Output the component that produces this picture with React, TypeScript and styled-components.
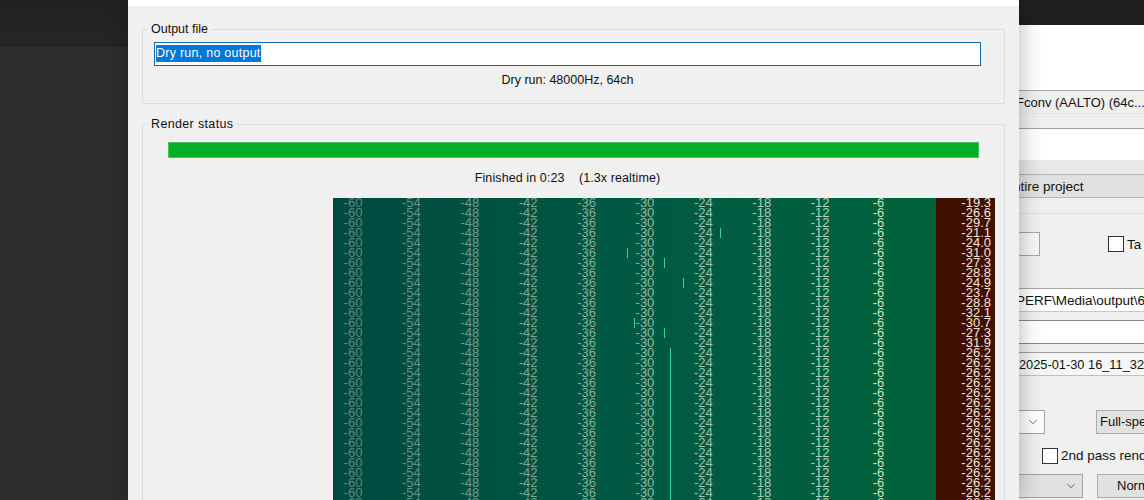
import React from "react";
import styled, { createGlobalStyle } from "styled-components";
import { ChevronDown } from "lucide-react";

const GlobalStyle = createGlobalStyle`
  html, body {
    margin: 0;
    padding: 0;
    background: #2d2d2d;
  }
  * {
    box-sizing: border-box;
  }
`;

const Screen = styled.div`
  display: flex;
  width: 1144px;
  height: 500px;
  overflow: hidden;
  font-family: "Liberation Sans", Arial, sans-serif;
  font-size: 12.5px;
  color: #111;
`;

const Backdrop = styled.div`
  flex: 0 0 128px;
  background: linear-gradient(#222222 0, #262626 44px, #1c1c1c 45px, #2d2d2d 46px);
`;

const Dialog = styled.div`
  flex: 0 0 891px;
  position: relative;
  z-index: 2;
  height: 500px;
  display: flex;
  flex-direction: column;
  background: #f0f0f0;
  box-shadow: 0 0 22px rgba(0, 0, 0, 0.3);
`;

const TitleStrip = styled.div`
  flex: 0 0 6px;
  background: #ffffff;
`;

const Body = styled.div`
  flex: 1;
  padding: 16px 14px 0 14px;
  display: flex;
  flex-direction: column;
  gap: 13px;
  min-height: 0;
`;

const Group = styled.fieldset<{ $height: number }>`
  flex: 0 0 ${(p) => p.$height}px;
  margin: 0;
  padding: 0;
  min-width: 0;
  border: 1px solid #dcdcdc;
  border-radius: 2px;
`;

const GroupTitle = styled.legend<{ $spacing: number }>`
  margin-left: 5px;
  padding: 0 3px;
  line-height: 14px;
  font-size: 12.5px;
  letter-spacing: ${(p) => p.$spacing}px;
`;

const OutputInput = styled.div`
  height: 24px;
  margin: 6px 23px 0 11px;
  padding: 2px 0 0 1px;
  background: #ffffff;
  border: 1px solid #0f6cad;
`;

const Selected = styled.span`
  display: inline-block;
  height: 17px;
  line-height: 17px;
  letter-spacing: 0.25px;
  background: #0078d7;
  color: #ffffff;
`;

const Caption = styled.div<{ $top: number; $spacing: number }>`
  margin-top: ${(p) => p.$top}px;
  padding-right: 12px;
  text-align: center;
  line-height: 14px;
  letter-spacing: ${(p) => p.$spacing}px;
  white-space: pre;
`;

const Progress = styled.div`
  height: 16px;
  margin: 11px 25px 0 25px;
  background: #06ad25;
  border: 1px solid #4cbf5f;
`;

const Meter = styled.div`
  display: flex;
  width: 662px;
  height: 302px;
  margin: 13px 0 0 190px;
  overflow: hidden;
`;

const Scale = styled.div`
  flex: 0 0 603px;
  background: linear-gradient(90deg, #004a40, #005a42 55%, #00633c);
`;

const MeterRow = styled.div`
  position: relative;
  display: flex;
  gap: 18.4px;
  height: 10px;
  line-height: 10px;
  font-size: 13px;
  white-space: nowrap;
`;

const ScaleLabel = styled.span<{ $tone: number }>`
  flex: 0 0 40px;
  text-align: center;
  color: ${(p) => `rgb(${95 + p.$tone * 11}, ${135 + p.$tone * 10}, ${128 + p.$tone * 7})`};
`;

const Tick = styled.i<{ $x: number }>`
  position: absolute;
  left: ${(p) => p.$x}px;
  top: 0;
  width: 1px;
  height: 10px;
  background: #37d2a2;
`;

const Peaks = styled.div`
  flex: 0 0 59px;
  background: #410f00;
`;

const PeakValue = styled.div`
  height: 10px;
  line-height: 10px;
  padding-right: 4px;
  text-align: right;
  font-size: 13px;
  color: #f4e6df;
  white-space: nowrap;
`;

const Behind = styled.div`
  flex: 0 0 125px;
  display: flex;
  flex-direction: column;
  height: 500px;
  overflow: hidden;
  background: #f0f0f0;
  white-space: nowrap;
`;

const Strip = styled.div<{ $height: number; $bg?: string; $line?: string }>`
  flex: 0 0 ${(p) => p.$height}px;
  display: flex;
  align-items: center;
  background: ${(p) => p.$bg ?? "#f0f0f0"};
  border-top: ${(p) => (p.$line ? `1px solid ${p.$line}` : "none")};
`;

const ClippedText = styled.span<{ $shift: number; $size: number }>`
  margin-left: ${(p) => p.$shift}px;
  font-size: ${(p) => p.$size}px;
`;

const Box = styled.div<{ $left: number; $width: number; $bg: string }>`
  flex: 0 0 ${(p) => p.$width}px;
  height: 24px;
  margin-left: ${(p) => p.$left}px;
  padding: 0 4px;
  display: flex;
  align-items: center;
  justify-content: flex-end;
  background: ${(p) => p.$bg};
  border: 1px solid #a4a4a4;
  border-left-width: 0;
  color: #333;
`;

const PushButton = styled.div<{ $left: number; $pad: number }>`
  flex: 1 0 auto;
  height: 24px;
  margin-left: ${(p) => p.$left}px;
  padding-left: ${(p) => p.$pad}px;
  line-height: 22px;
  font-size: 13px;
  background: #e1e1e1;
  border: 1px solid #adadad;
  border-right: 0;
`;

const CheckBox = styled.span<{ $left: number }>`
  flex: 0 0 16px;
  height: 16px;
  margin-left: ${(p) => p.$left}px;
  margin-right: 3px;
  background: #ffffff;
  border: 1px solid #333333;
`;

const Label = styled.span`
  font-size: 13.5px;
`;

const scaleMarks = [-60, -54, -48, -42, -36, -30, -24, -18, -12, -6];

const peakValues = [
  "-19.3", "-26.6", "-29.7", "-21.1", "-24.0", "-31.0", "-27.3", "-28.8",
  "-24.9", "-23.7", "-28.8", "-32.1", "-30.7", "-27.3", "-31.9",
];

const ROW_COUNT = 31;

// x of the peak tick per row, relative to the meter
const tickFor = (row: number): number | null => {
  const ticks: Record<number, number> = { 3: 387, 5: 294, 6: 331, 8: 350, 12: 301, 13: 331 };
  if (row >= 15) return 337;
  return ticks[row] ?? null;
};

const App = () => {
  const rows = Array.from({ length: ROW_COUNT }, (_, i) => i);

  return (
    <Screen>
      <GlobalStyle />
      <Backdrop />
      <Dialog>
        <TitleStrip />
        <Body>
          <Group $height={82}>
            <GroupTitle $spacing={0}>Output file</GroupTitle>
            <OutputInput>
              <Selected>Dry run, no output</Selected>
            </OutputInput>
            <Caption $top={7} $spacing={0}>Dry run: 48000Hz, 64ch</Caption>
          </Group>
          <Group $height={390}>
            <GroupTitle $spacing={0.35}>Render status</GroupTitle>
            <Progress />
            <Caption $top={13} $spacing={0.1}>{"Finished in 0:23    (1.3x realtime)"}</Caption>
            <Meter>
              <Scale>
                {rows.map((row) => {
                  const tick = tickFor(row);
                  return (
                    <MeterRow key={row}>
                      {scaleMarks.map((mark, i) => (
                        <ScaleLabel key={mark} $tone={i}>
                          {mark}
                        </ScaleLabel>
                      ))}
                      {tick !== null && <Tick $x={tick} />}
                    </MeterRow>
                  );
                })}
              </Scale>
              <Peaks>
                {rows.map((row) => (
                  <PeakValue key={row}>{peakValues[row] ?? "-26.2"}</PeakValue>
                ))}
              </Peaks>
            </Meter>
          </Group>
        </Body>
      </Dialog>
      <Behind>
        <Strip $height={25} $bg="#202020" />
        <Strip $height={65} $bg="#ffffff" />
        <Strip $height={23} $bg="#efefef" $line="#a8a8a8">
          <ClippedText $shift={-3} $size={13}>Fconv (AALTO) (64c...</ClippedText>
        </Strip>
        <Strip $height={15} $line="#e4e4e4" />
        <Strip $height={32} $bg="#ffffff" $line="#a0a0a0" />
        <Strip $height={14} $bg="#e8e8e8" />
        <Strip $height={23} $bg="#e1e1e1" $line="#b0b0b0">
          <ClippedText $shift={-15} $size={13.5}>Entire project</ClippedText>
        </Strip>
        <Strip $height={16} $line="#b8b8b8" />
        <Strip $height={19} $line="#dedede" />
        <Strip $height={24}>
          <Box $left={0} $width={21} $bg="#f6f6f6" />
          <CheckBox $left={68} />
          <Label>Ta</Label>
        </Strip>
        <Strip $height={32} />
        <Strip $height={23} $bg="#ffffff" $line="#a8a8a8">
          <ClippedText $shift={-3} $size={13.5}>PERF\Media\output\64</ClippedText>
        </Strip>
        <Strip $height={9} $line="#c8c8c8" />
        <Strip $height={23} $bg="#ffffff" $line="#888888" />
        <Strip $height={9} $line="#888888" />
        <Strip $height={23} $bg="#f6f6f6" $line="#a0a0a0">
          <ClippedText $shift={0} $size={12.8}>2025-01-30 16_11_32.</ClippedText>
        </Strip>
        <Strip $height={35} $line="#c0c0c0" />
        <Strip $height={24}>
          <Box $left={0} $width={26} $bg="#ffffff">
            <ChevronDown size={14} strokeWidth={1.2} />
          </Box>
          <PushButton $left={51} $pad={3}>Full-speed</PushButton>
        </Strip>
        <Strip $height={13} />
        <Strip $height={17}>
          <CheckBox $left={23} />
          <Label>2nd pass render</Label>
        </Strip>
        <Strip $height={10} />
        <Strip $height={24}>
          <Box $left={0} $width={64} $bg="#e1e1e1">
            <ChevronDown size={14} strokeWidth={1.2} />
          </Box>
          <PushButton $left={14} $pad={19}>Normal</PushButton>
        </Strip>
      </Behind>
    </Screen>
  );
};

export default App;
